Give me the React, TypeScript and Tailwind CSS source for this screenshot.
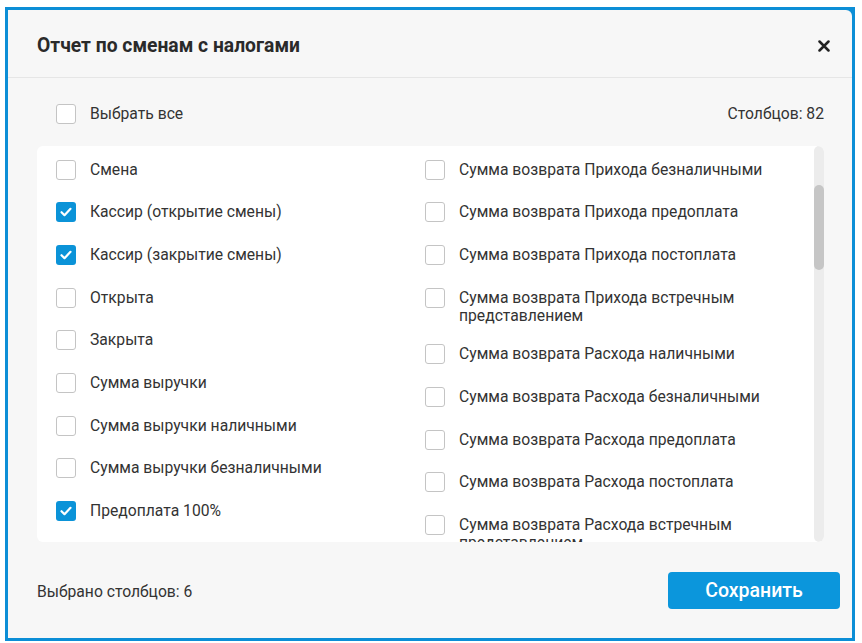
import React from "react";

const leftItems: { label: string; checked?: boolean }[] = [
  { label: "Смена" },
  { label: "Кассир (открытие смены)", checked: true },
  { label: "Кассир (закрытие смены)", checked: true },
  { label: "Открыта" },
  { label: "Закрыта" },
  { label: "Сумма выручки" },
  { label: "Сумма выручки наличными" },
  { label: "Сумма выручки безналичными" },
  { label: "Предоплата 100%", checked: true },
];

const rightItems: { label: string; checked?: boolean }[] = [
  { label: "Сумма возврата Прихода безналичными" },
  { label: "Сумма возврата Прихода предоплата" },
  { label: "Сумма возврата Прихода постоплата" },
  { label: "Сумма возврата Прихода встречным представлением" },
  { label: "Сумма возврата Расхода наличными" },
  { label: "Сумма возврата Расхода безналичными" },
  { label: "Сумма возврата Расхода предоплата" },
  { label: "Сумма возврата Расхода постоплата" },
  { label: "Сумма возврата Расхода встречным представлением" },
];

function Checkbox({ checked }: { checked?: boolean }) {
  if (checked) {
    return (
      <span className="flex h-5 w-5 shrink-0 items-center justify-center rounded-[3px] bg-[#0b93d8]">
        <svg width="14" height="14" viewBox="0 0 14 14" fill="none">
          <path d="M2.5 7.2l3 3 6-6.4" stroke="#fff" strokeWidth="2.2" strokeLinecap="round" strokeLinejoin="round" />
        </svg>
      </span>
    );
  }
  return <span className="block h-5 w-5 shrink-0 rounded-[3px] border border-[#c4c4c4] bg-white" />;
}

function Row({ label, checked }: { label: string; checked?: boolean }) {
  return (
    <div className="box-content flex min-h-[24px] items-start gap-[14px] py-[9.33px]">
      <span className="mt-px">
        <Checkbox checked={checked} />
      </span>
      <span className="pt-[2px] text-[15.7px] leading-[18px] text-[#333]">{label}</span>
    </div>
  );
}

export default function App() {
  return (
    <div
      className="h-[643px] w-[862px] overflow-hidden bg-white pl-[5px] pt-[7px]"
      style={{ fontFamily: "Roboto, 'Noto Sans', sans-serif" }}
    >
      <div className="h-[634px] w-[850px] bg-[#0c8ed6] p-[3px]">
        <div className="flex h-full flex-col rounded-tr-[6px] bg-[#f7f7f7]">
          {/* header */}
          <div className="flex h-[68px] shrink-0 items-center justify-between border-b border-[#e6e6e6] pl-[29px] pr-[22px] pt-[5px]">
            <h1 className="text-[19.3px] font-bold text-[#2a2a2a]">Отчет по сменам с налогами</h1>
            <svg width="12" height="12" viewBox="0 0 12 12">
              <path d="M1.5 1.5l9 9M10.5 1.5l-9 9" stroke="#222" strokeWidth="2.5" strokeLinecap="round" />
            </svg>
          </div>

          {/* body */}
          <div className="flex flex-col gap-[22px] pl-[29px] pr-[28px] pt-[26px]">
            <div className="flex h-5 items-center justify-between pl-[19px]">
              <div className="flex items-center gap-[14px]">
                <Checkbox />
                <span className="text-[15.7px] text-[#333]">Выбрать все</span>
              </div>
              <span className="text-[15.7px] text-[#333]">Столбцов: 82</span>
            </div>

            <div className="flex h-[396px] overflow-hidden rounded-[6px] bg-white">
              <div className="grid flex-1 grid-cols-[369px_1fr] pl-[19px] pt-[3.5px]">
                <div className="flex flex-col">
                  {leftItems.map((it) => (
                    <Row key={it.label} {...it} />
                  ))}
                </div>
                <div className="flex flex-col">
                  {rightItems.map((it) => (
                    <Row key={it.label} {...it} />
                  ))}
                </div>
              </div>
              <div className="h-full w-[10px] shrink-0 rounded-full bg-[#ececec] pt-[39px]">
                <div className="h-[85px] w-full rounded-full bg-[#c6c6c6]" />
              </div>
            </div>
          </div>

          {/* footer */}
          <div className="flex flex-1 items-center justify-between pl-[29px] pr-[12px]">
            <span className="pt-[3px] text-[15.7px] text-[#333]">Выбрано столбцов: 6</span>
            <button className="h-[37px] w-[172px] rounded-[4px] bg-[#0b96dc] pt-[2px] text-[19.5px] font-medium text-white">
              Сохранить
            </button>
          </div>
        </div>
      </div>
    </div>
  );
}
